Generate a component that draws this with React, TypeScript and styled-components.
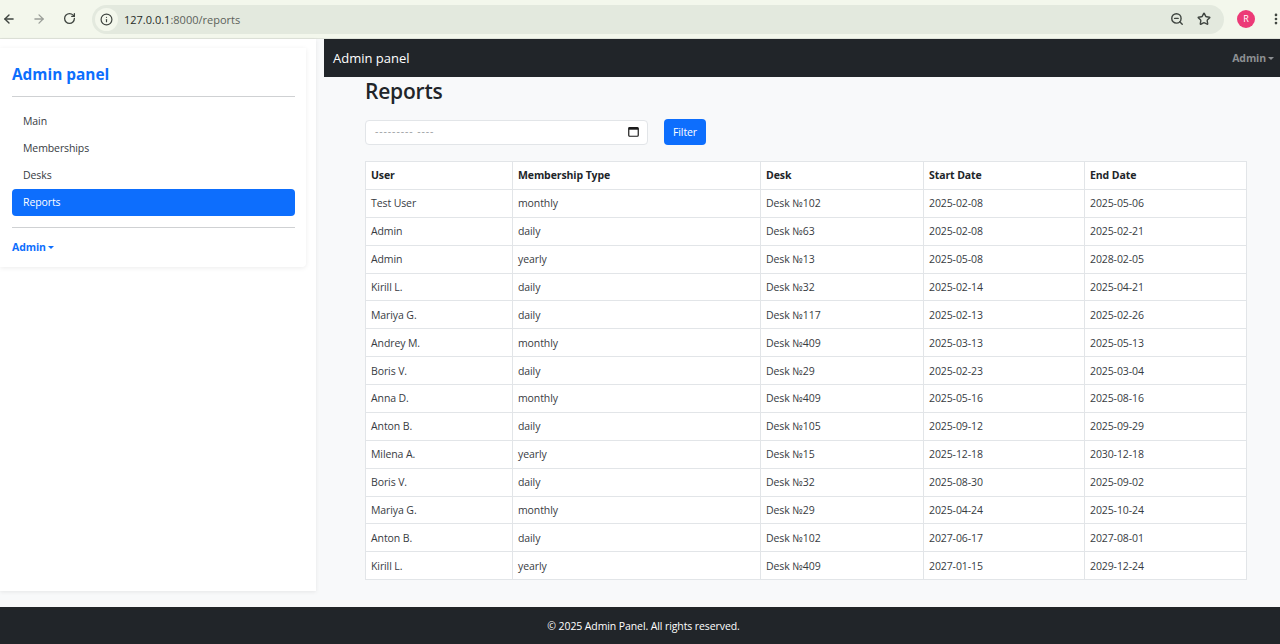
import { createGlobalStyle } from "styled-components";
import styled from "styled-components";
import { ArrowLeft, ArrowRight, RotateCw, Info, ZoomOut, Star, MoreVertical } from "lucide-react";

const GlobalStyle = createGlobalStyle`
  html, body {
    margin: 0;
    padding: 0;
    height: 100%;
    overflow: hidden;
    background: #f8f9fa;
  }
  body {
    font-family: "Open Sans", "Noto Sans", sans-serif;
    font-size: 10.5px;
    letter-spacing: -0.1px;
    color: #212529;
  }
`;

const Page = styled.div`
  display: flex;
  flex-direction: column;
  width: 1280px;
  height: 644px;
  overflow: hidden;
`;

const BrowserBar = styled.div`
  display: flex;
  align-items: center;
  height: 38px;
  flex-shrink: 0;
  background: #f3f7ec;
  border-bottom: 1px solid #dfe3da;
`;

const NavButton = styled.span<{ $dim?: boolean }>`
  display: flex;
  width: 18px;
  margin-right: 12px;
  padding-bottom: 1px;
  justify-content: center;
  color: ${(p) => (p.$dim ? "#9a9e98" : "#3f4540")};
`;

const Omnibox = styled.div`
  display: flex;
  align-items: center;
  flex: 1;
  height: 29px;
  margin-left: 2px;
  border-radius: 15px;
  background: #e3e9de;
  padding-right: 13px;
`;

const InfoChip = styled.span`
  display: flex;
  align-items: center;
  justify-content: center;
  width: 23px;
  height: 23px;
  margin-left: 3px;
  border-radius: 50%;
  background: #f3f7ec;
  color: #3f4540;
`;

const Url = styled.span`
  margin-left: 6px;
  font-size: 11px;
  letter-spacing: 0;
  color: #5c625b;
  b {
    font-weight: 400;
    color: #262b26;
  }
`;

const OmniIcons = styled.div`
  display: flex;
  align-items: center;
  gap: 13px;
  margin-left: auto;
  padding-bottom: 1px;
  color: #3f4540;
`;

const BarEnd = styled.div`
  display: flex;
  align-items: center;
  flex-shrink: 0;
  width: 56px;
  box-sizing: border-box;
  color: #3f4540;
  padding: 0 0 1px 13px;
  gap: 14px;
  svg {
    flex-shrink: 0;
  }
`;

const Avatar = styled.span`
  display: flex;
  align-items: center;
  justify-content: center;
  flex-shrink: 0;
  width: 18px;
  height: 18px;
  border-radius: 50%;
  background: #ec3a77;
  color: #fff;
  font-size: 9px;
`;

const Body = styled.div`
  display: flex;
  flex: 1;
  min-height: 0;
`;

const SideColumn = styled.aside`
  width: 316px;
  height: 552px;
  flex-shrink: 0;
  background: #fff;
  box-shadow: 0 1px 4px rgba(0, 0, 0, 0.08);
`;

const SideCard = styled.div`
  width: 306px;
  margin-top: 9px;
  padding: 17px 11px 12px 12px;
  background: #fff;
  border-radius: 0 0 4px 0;
  box-shadow: 0 1px 5px rgba(0, 0, 0, 0.08);
  box-sizing: border-box;
`;

const Brand = styled.div`
  font-size: 15.4px;
  font-weight: 700;
  line-height: 20px;
  letter-spacing: 0;
  color: #0d6efd;
`;

const Rule = styled.hr`
  border: 0;
  border-top: 1px solid #cfd1d3;
  margin: 11px 0;
`;

const SideLink = styled.a<{ $active?: boolean }>`
  display: block;
  height: 27px;
  line-height: 27px;
  padding-left: 11px;
  border-radius: 4px;
  color: ${(p) => (p.$active ? "#fff" : "#373b3f")};
  background: ${(p) => (p.$active ? "#0d6efd" : "transparent")};
`;

const UserMenu = styled.div`
  display: flex;
  align-items: center;
  gap: 2px;
  font-weight: 700;
  line-height: 16px;
  color: #0d6efd;
`;

const Caret = styled.span`
  display: inline-block;
  margin-top: 1px;
  border-top: 3px solid currentColor;
  border-left: 3px solid transparent;
  border-right: 3px solid transparent;
`;

const Main = styled.main`
  display: flex;
  flex-direction: column;
  flex: 1;
  min-width: 0;
  padding-left: 8px;
`;

const TopNav = styled.nav`
  display: flex;
  align-items: center;
  justify-content: space-between;
  height: 38px;
  flex-shrink: 0;
  padding: 0 6px 0 9px;
  background: #212529;
`;

const NavBrand = styled.span`
  font-size: 13px;
  letter-spacing: 0;
  color: #fff;
`;

const NavUser = styled(UserMenu)`
  color: #8d9093;
`;

const Content = styled.div`
  padding: 0 33px 0 41px;
`;

const Title = styled.h1`
  margin: 0;
  font-size: 21px;
  font-weight: 600;
  line-height: 28px;
  letter-spacing: -0.2px;
  color: #212529;
`;

const FilterRow = styled.form`
  display: flex;
  align-items: center;
  margin-top: 14px;
  gap: 16px;
`;

const DateField = styled.div`
  display: flex;
  align-items: center;
  justify-content: space-between;
  width: 283px;
  height: 25px;
  padding: 0 8px 2px 9px;
  box-sizing: border-box;
  background: #fff;
  border: 1px solid #e2e5e8;
  border-radius: 4px;
  color: #9a9da0;
  letter-spacing: 0.9px;
  svg {
    margin-top: 1px;
  }
`;

const FilterButton = styled.button`
  width: 42px;
  height: 26px;
  padding: 0;
  border: 0;
  border-radius: 4px;
  background: #0d6efd;
  color: #fff;
  font: inherit;
  letter-spacing: inherit;
`;

const Table = styled.table`
  width: 881px;
  margin-top: 16px;
  border-collapse: collapse;
  table-layout: fixed;
  background: #fff;
`;

const Th = styled.th`
  height: 26.88px;
  padding: 0 5px;
  border: 1px solid #e2e5e8;
  text-align: left;
  font-weight: 700;
  color: #212529;
`;

const Td = styled.td`
  height: 26.88px;
  padding: 0 5px;
  border: 1px solid #e2e5e8;
  color: #373b3f;
`;

const Footer = styled.footer`
  display: flex;
  align-items: center;
  justify-content: center;
  height: 37px;
  flex-shrink: 0;
  padding-left: 7px;
  background: #212529;
  color: #fff;
`;

const rows = [
  ["Test User", "monthly", "Desk №102", "2025-02-08", "2025-05-06"],
  ["Admin", "daily", "Desk №63", "2025-02-08", "2025-02-21"],
  ["Admin", "yearly", "Desk №13", "2025-05-08", "2028-02-05"],
  ["Kirill L.", "daily", "Desk №32", "2025-02-14", "2025-04-21"],
  ["Mariya G.", "daily", "Desk №117", "2025-02-13", "2025-02-26"],
  ["Andrey M.", "monthly", "Desk №409", "2025-03-13", "2025-05-13"],
  ["Boris V.", "daily", "Desk №29", "2025-02-23", "2025-03-04"],
  ["Anna D.", "monthly", "Desk №409", "2025-05-16", "2025-08-16"],
  ["Anton B.", "daily", "Desk №105", "2025-09-12", "2025-09-29"],
  ["Milena A.", "yearly", "Desk №15", "2025-12-18", "2030-12-18"],
  ["Boris V.", "daily", "Desk №32", "2025-08-30", "2025-09-02"],
  ["Mariya G.", "monthly", "Desk №29", "2025-04-24", "2025-10-24"],
  ["Anton B.", "daily", "Desk №102", "2027-06-17", "2027-08-01"],
  ["Kirill L.", "yearly", "Desk №409", "2027-01-15", "2029-12-24"],
];

const columns = [
  { title: "User", width: 147 },
  { title: "Membership Type", width: 248 },
  { title: "Desk", width: 163 },
  { title: "Start Date", width: 161 },
  { title: "End Date", width: 162 },
];

const links = ["Main", "Memberships", "Desks", "Reports"];

const CalendarIcon = () => (
  <svg width="11" height="11" viewBox="0 0 11 11" fill="none">
    <rect x="0.75" y="1.5" width="9.5" height="8.75" rx="1" stroke="#1b1b1b" strokeWidth="1.2" />
    <rect x="0.75" y="1.5" width="9.5" height="2.2" fill="#1b1b1b" />
  </svg>
);

export default function App() {
  return (
    <Page>
      <GlobalStyle />
      <BrowserBar>
        <NavButton>
          <ArrowLeft size={14} strokeWidth={2.4} />
        </NavButton>
        <NavButton $dim>
          <ArrowRight size={14} strokeWidth={2.2} />
        </NavButton>
        <NavButton>
          <RotateCw size={13} strokeWidth={2.4} />
        </NavButton>
        <Omnibox>
          <InfoChip>
            <Info size={13} strokeWidth={2.2} />
          </InfoChip>
          <Url>
            <b>127.0.0.1</b>:8000/reports
          </Url>
          <OmniIcons>
            <ZoomOut size={14} strokeWidth={2.4} />
            <Star size={14} strokeWidth={2.4} />
          </OmniIcons>
        </Omnibox>
        <BarEnd>
          <Avatar>R</Avatar>
          <MoreVertical size={14} strokeWidth={2.6} />
        </BarEnd>
      </BrowserBar>
      <Body>
        <SideColumn>
          <SideCard>
            <Brand>Admin panel</Brand>
            <Rule />
            {links.map((link) => (
              <SideLink key={link} $active={link === "Reports"}>
                {link}
              </SideLink>
            ))}
            <Rule />
            <UserMenu>
              Admin <Caret />
            </UserMenu>
          </SideCard>
        </SideColumn>
        <Main>
          <TopNav>
            <NavBrand>Admin panel</NavBrand>
            <NavUser>
              Admin <Caret />
            </NavUser>
          </TopNav>
          <Content>
            <Title>Reports</Title>
            <FilterRow>
              <DateField>
                --------- ----
                <CalendarIcon />
              </DateField>
              <FilterButton type="button">Filter</FilterButton>
            </FilterRow>
            <Table>
              <colgroup>
                {columns.map((col) => (
                  <col key={col.title} width={col.width} />
                ))}
              </colgroup>
              <thead>
                <tr>
                  {columns.map((col) => (
                    <Th key={col.title}>{col.title}</Th>
                  ))}
                </tr>
              </thead>
              <tbody>
                {rows.map((row, i) => (
                  <tr key={i}>
                    {row.map((cell, j) => (
                      <Td key={j}>{cell}</Td>
                    ))}
                  </tr>
                ))}
              </tbody>
            </Table>
          </Content>
        </Main>
      </Body>
      <Footer>© 2025 Admin Panel. All rights reserved.</Footer>
    </Page>
  );
}
